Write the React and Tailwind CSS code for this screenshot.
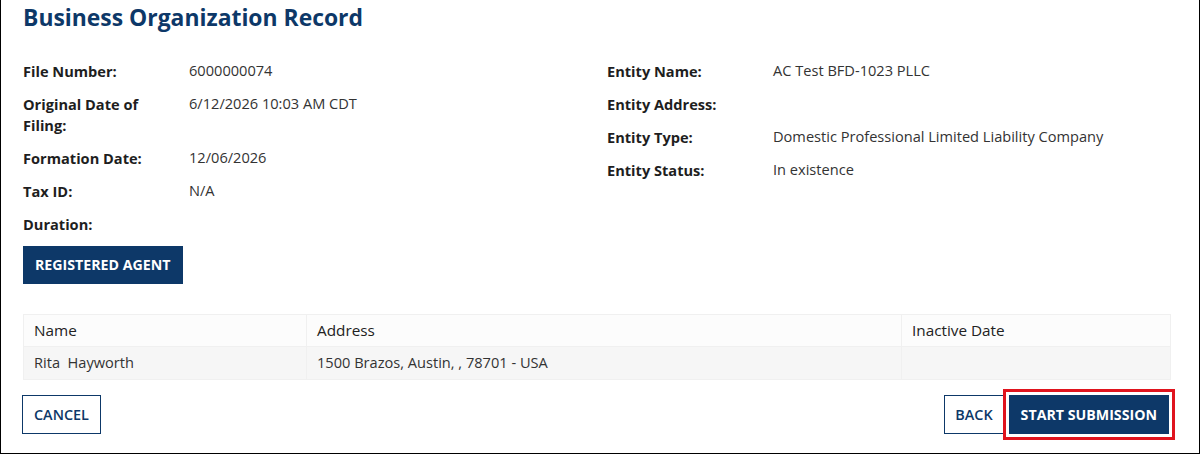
import React from "react";

const navy = "text-[#0d3868]";

function Field({ label, value }) {
  return (
    <div className="flex items-start">
      <div className="w-[166px] shrink-0 pr-4 pt-[1px] text-[14.6px] font-bold leading-[21px] text-[#1e1e1e]">{label}</div>
      <div className="text-[14.6px] leading-[21px] text-[#333]">{value}</div>
    </div>
  );
}

export default function App() {
  return (
    <div
      className="w-[1200px] h-[454px] bg-white border-x border-b border-black overflow-hidden"
      style={{ fontFamily: '"Open Sans", "Liberation Sans", sans-serif' }}
    >
      <div className="pl-[22px] pr-[24px]">
        <h1 className={`${navy} text-[22.9px] font-bold leading-[30px] pt-[3px]`}>Business Organization Record</h1>

        <div className="mt-[27px] grid grid-cols-[584px_1fr]">
          {/* left column */}
          <div className="flex flex-col gap-[11px]">
            <Field label="File Number:" value="6000000074" />
            <Field label={<>Original Date of<br />Filing:</>} value="6/12/2026 10:03 AM CDT" />
            <Field label="Formation Date:" value="12/06/2026" />
            <Field label="Tax ID:" value="N/A" />
            <Field label="Duration:" value="" />
          </div>
          {/* right column */}
          <div className="flex flex-col gap-[11px]">
            <Field label="Entity Name:" value="AC Test BFD-1023 PLLC" />
            <Field label="Entity Address:" value="" />
            <Field label="Entity Type:" value="Domestic Professional Limited Liability Company" />
            <Field label="Entity Status:" value="In existence" />
          </div>
        </div>

        <button className="mt-[11px] h-[38px] px-[12px] bg-[#0d3868] text-white text-[14.2px] font-bold uppercase">
          Registered Agent
        </button>

        {/* agent table */}
        <table className="mt-[30px] w-[1148px] border-collapse text-[14.6px] text-[#333]">
          <thead>
            <tr className="bg-[#fcfcfc]">
              <th className="w-[283px] h-[32px] px-[10px] text-left font-normal text-[15.3px] text-[#222] border border-[#f0f0f0]">Name</th>
              <th className="w-[595px] px-[10px] text-left font-normal text-[15.3px] text-[#222] border border-[#f0f0f0]">Address</th>
              <th className="px-[10px] text-left font-normal text-[15.3px] text-[#222] border border-[#f0f0f0]">Inactive Date</th>
            </tr>
          </thead>
          <tbody>
            <tr className="bg-[#f6f6f6]">
              <td className="h-[33px] px-[10px] border border-[#f0f0f0]">Rita&nbsp; Hayworth</td>
              <td className="px-[10px] border border-[#f0f0f0]">1500 Brazos, Austin, , 78701 - USA</td>
              <td className="px-[10px] border border-[#f0f0f0]"></td>
            </tr>
          </tbody>
        </table>

        {/* actions */}
        <div className="mt-[15px] flex items-center justify-between">
          <button className={`h-[39px] px-[11px] border border-[#0d3868] bg-white ${navy} text-[14.4px] font-semibold uppercase -ml-px`}>
            Cancel
          </button>
          <div className="flex items-center">
            <button className={`h-[39px] px-[10px] border border-[#0d3868] bg-white ${navy} text-[14.4px] font-semibold uppercase -mr-px`}>
              Back
            </button>
            <div className="border-[3px] border-[#e0141e] p-[3px] -my-[6px]">
              <button className="h-[39px] px-[12px] bg-[#0d3868] text-white text-[14.2px] font-bold uppercase">
                Start Submission
              </button>
            </div>
          </div>
        </div>
      </div>
    </div>
  );
}
